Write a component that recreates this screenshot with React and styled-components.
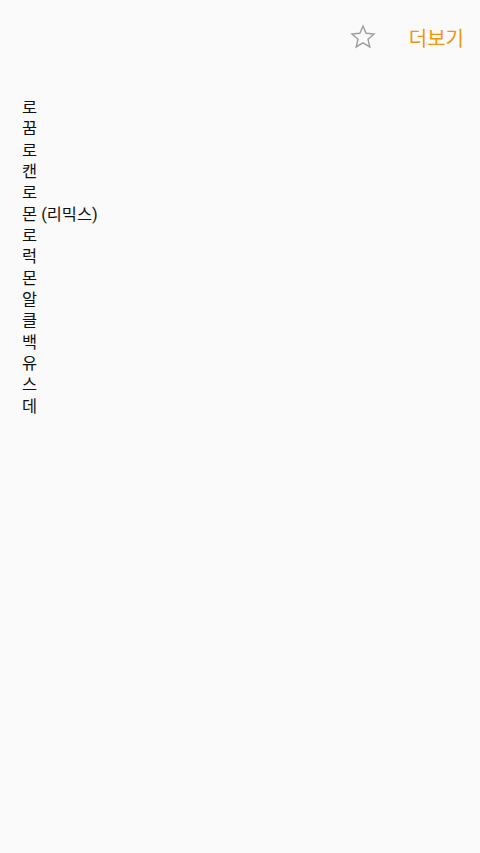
import React from "react";
import styled, { createGlobalStyle } from "styled-components";

const Global = createGlobalStyle`
  html, body { margin: 0; padding: 0; background: #fafafa; }
  body { font-family: Roboto, "Noto Sans CJK KR", sans-serif; }
`;

const Page = styled.div`
  width: 480px;
  min-height: 853px;
  background: #fafafa;
`;

const Header = styled.div`
  height: 74px;
  display: flex;
  align-items: center;
  justify-content: flex-end;
  padding-right: 16px;
  gap: 33px;
`;

const StarButton = styled.button`
  border: none;
  background: none;
  padding: 0;
  width: 26px;
  height: 26px;
  display: flex;
  align-items: center;
  justify-content: center;
  color: #9e9e9e;
`;

const MoreButton = styled.button`
  border: none;
  background: none;
  padding: 0;
  font-family: Roboto, "Noto Sans CJK KR", sans-serif;
  font-size: 20px;
  color: #ef960c;
`;

const List = styled.div`
  padding: 23px 0 0 22px;
  display: flex;
  flex-direction: column;
`;

const Line = styled.div`
  font-family: Roboto, "Noto Sans CJK KR", sans-serif;
  font-size: 16.4px;
  line-height: 21.35px;
  color: #111;
  white-space: nowrap;
`;

const lines = ["로", "꿈", "로", "캔", "로", "몬 (리믹스)", "로", "럭", "몬", "알", "클", "백", "유", "스", "데"];

export default function App() {
  return (
    <Page>
      <Global />
      <Header>
        <StarButton aria-label="즐겨찾기">
          <svg width="26" height="26" viewBox="0 0 24 24" fill="none" stroke="currentColor" strokeWidth="1.3" strokeLinejoin="miter">
            <polygon points="12,1.8 14.9,8.6 22.2,9.2 16.6,14 18.3,21.2 12,17.4 5.7,21.2 7.4,14 1.8,9.2 9.1,8.6" />
          </svg>
        </StarButton>
        <MoreButton>더보기</MoreButton>
      </Header>
      <List>
        {lines.map((t, i) => (
          <Line key={i}>{t}</Line>
        ))}
      </List>
    </Page>
  );
}
